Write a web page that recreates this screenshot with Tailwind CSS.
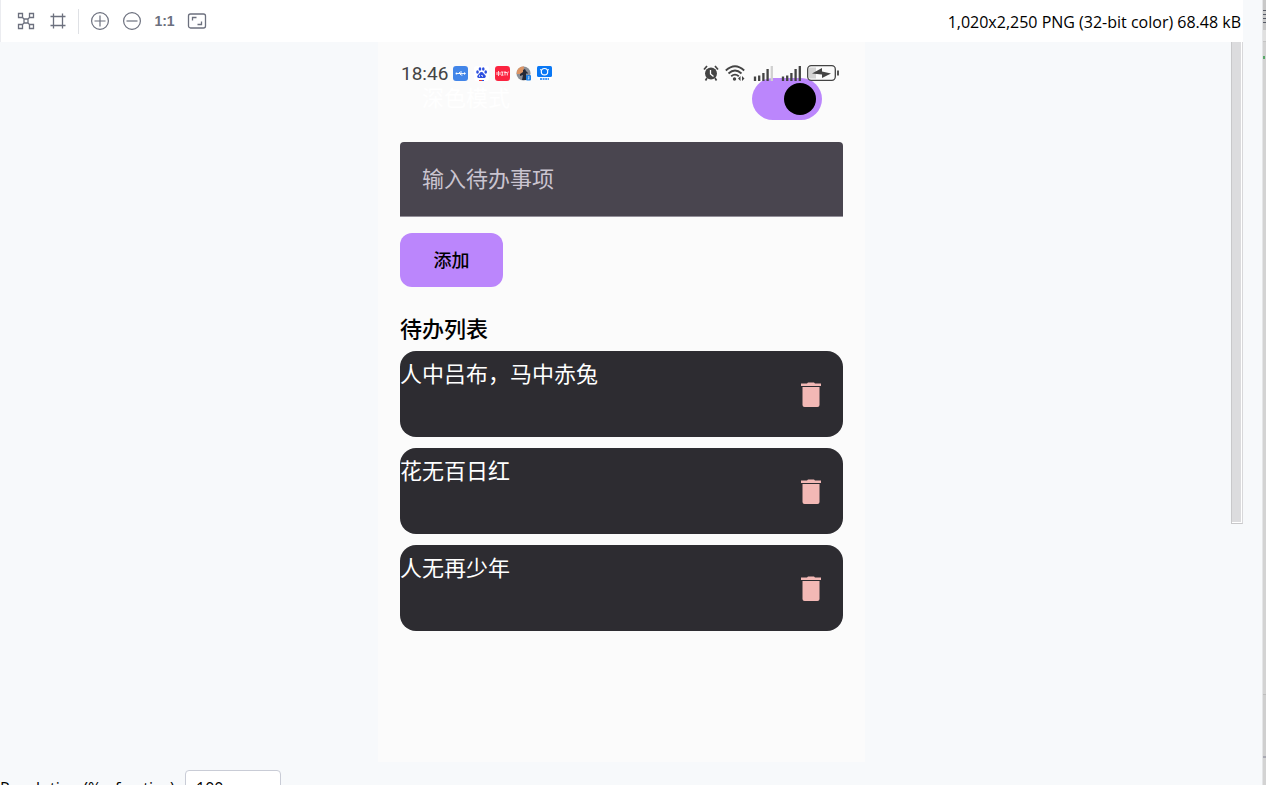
<!DOCTYPE html>
<html lang="zh" class="h-full">
<head>
    <meta charset="utf-8">
    <title>Image Viewer</title>
    <script src="https://cdn.jsdelivr.net/npm/@tailwindcss/browser@4"></script>
</head>
<body class="h-full overflow-hidden flex bg-[#f7f9fb] font-['Open_Sans','Noto_Sans_CJK_SC',sans-serif] text-black">
    <div class="flex-1 min-w-0 h-full flex flex-col">

        <!-- toolbar -->
        <header class="h-[42px] shrink-0 bg-white border-l border-[#ebecf0] flex items-center justify-between pl-[15px] pr-0.5">
            <div class="flex items-center gap-3 text-[#6c707e]">
                <button class="size-5" aria-label="Chessboard">
                    <svg viewBox="0 0 20 20" class="size-5" fill="none" stroke="currentColor">
                        <path d="M2.5 2.5h4v4h-4zM13.5 2.5h4v4h-4zM8 8h4v4h-4zM2.5 13.5h4v4h-4zM13.5 13.5h4v4h-4zM6.5 6.5L8 8M13.5 6.5L12 8M6.5 13.5L8 12M13.5 13.5L12 12" stroke-width="1.3"/>
                    </svg>
                </button>
                <button class="size-5" aria-label="Grid">
                    <svg viewBox="0 0 20 20" class="size-5" fill="none" stroke="currentColor">
                        <path d="M5.5 2.500v15M14.5 2.500v15M2.500 5.500h15M2.500 14.500h15" stroke-width="1.3"/>
                    </svg>
                </button>
                <span class="w-px h-[25px] bg-[#dfe1e5] -ml-0.5"></span>
                <button class="size-5 -ml-px" aria-label="Zoom in">
                    <svg viewBox="0 0 20 20" class="size-5" fill="none" stroke="currentColor" stroke-width="1.2">
                        <circle cx="10" cy="10" r="8.4"/><path d="M4.500 10h11M10 4.500v11"/>
                    </svg>
                </button>
                <button class="size-5" aria-label="Zoom out">
                    <svg viewBox="0 0 20 20" class="size-5" fill="none" stroke="currentColor" stroke-width="1.2">
                        <circle cx="10" cy="10" r="8.4"/><path d="M4.500 10h11"/>
                    </svg>
                </button>
                <button class="w-[21px] text-sm leading-5 font-bold text-center font-['Liberation_Sans',sans-serif]">1:1</button>
                <button class="size-5" aria-label="Fit to window">
                    <svg viewBox="0 0 20 20" class="size-5" fill="none" stroke="currentColor" stroke-width="1.3">
                        <rect x="1.5" y="3" width="17" height="14" rx="2"/><path d="M5.500 9.500v-3h4M14.500 10.500v3h-4"/>
                    </svg>
                </button>
            </div>
            <p class="pt-0.5 text-base leading-6 whitespace-nowrap">1,020x2,250 PNG (32-bit color) 68.48 kB</p>
        </header>

        <!-- canvas -->
        <main class="relative h-[720px] shrink-0 flex justify-center">
            <div class="absolute right-0 top-0 w-3 h-[482px] bg-[#dcdcde] border-l border-r border-b border-[#c8c8ca] border-r-[#d8d8da] shadow-[inset_-1px_-1px_0_#fff]"></div>

            <section class="w-[487px] bg-[#fbfbfb] px-[22px] pt-5 font-['Noto_Sans_CJK_SC',sans-serif]">
                <div class="relative z-10 h-[22px] flex items-center justify-between pl-px pr-1 text-[#444]">
                    <div class="flex items-center gap-1.5">
                        <span class="w-[46px] text-[19px] leading-[22px] pt-0.5 font-['Roboto',sans-serif]">18:46</span>
                        <svg viewBox="0 0 15 15" class="size-[15px]">
                            <rect width="15" height="15" rx="3" fill="#4285e8"/>
                            <path d="M3 7.500h9M5.500 7.500L7 6h2M6.500 7.500L8 9h1.500" fill="none" stroke="#fff" stroke-width=".9"/><circle cx="3.500" cy="7.500" r="1" fill="#fff"/><path d="M11 6l2 1.500-2 1.500z" fill="#fff"/>
                        </svg>
                        <svg viewBox="0 0 15 15" class="size-[15px]">
                            <rect width="15" height="15" rx="3" fill="#fff"/>
                            <g fill="#2d4fe0"><ellipse cx="3.5" cy="6" rx="1.3" ry="1.7"/><ellipse cx="6" cy="3" rx="1.3" ry="1.7"/><ellipse cx="9.3" cy="3" rx="1.3" ry="1.7"/><ellipse cx="11.7" cy="6" rx="1.3" ry="1.7"/><path d="M7.500 6c2 0 2 2 3.600 3 1.400 1 .6 3-1 3H5c-2 0-2.400-2-1-3 1.600-1 1.500-3 3.500-3z"/></g>
                            <path d="M5.500 9v2M7 9.500h1.500V11" fill="none" stroke="#fff" stroke-width=".7"/>
                            <path d="M5 14.500h3" stroke="#e33"/><path d="M8 14.500h2" stroke="#2d4fe0"/>
                        </svg>
                        <svg viewBox="0 0 15 15" class="size-[15px]">
                            <rect width="15" height="15" rx="3" fill="#fb2440"/>
                            <path d="M2 6v3M3.500 5v5M5 6v3M6 6h2.500M7.300 6v3M6 9.200h2.500M10 5v4.500M9.300 6.500h3v3M13.300 5.500v1" fill="none" stroke="#fff" stroke-width=".8"/>
                        </svg>
                        <svg viewBox="0 0 15 15" class="size-[15px]">
                            <circle cx="7.5" cy="7.5" r="7" fill="#8b8f96"/><path d="M1 5a7 7 0 0 1 7-4.500L7 8H.7z" fill="#dd9464"/>
                            <path d="M7 4l2-1 1 2 2 2-1 1-1-1v7H6l1-5-3 1V8l3-2z" fill="#242936"/><rect x="10" y="9" width="5" height="5.5" rx="1" fill="#1c7fe4"/><path d="M12.800 10v3h-1" fill="none" stroke="#fff" stroke-width=".7"/>
                        </svg>
                        <svg viewBox="0 0 15 15" class="size-[15px]">
                            <rect y="1" width="15" height="13" rx="2" fill="#fff"/><rect width="15" height="11" rx="1.5" fill="#0a78f5"/>
                            <circle cx="7.5" cy="5.7" r="3.2" fill="none" stroke="#fff" stroke-width="1.2"/><path d="M3 3.500l2 1M12 3.500l-2 1" stroke="#fff"/>
                            <path d="M3 13h9" stroke="#0a78f5" stroke-width="1.6" stroke-dasharray="2 .6"/>
                        </svg>
                    </div>
                    <div class="flex items-center gap-2">
                        <svg viewBox="0 0 16 16" class="size-4 -mr-0.5">
                            <circle cx="8" cy="8.5" r="6" fill="currentColor"/><path d="M1 4.500L4 1M15 4.500L12 1M4 13l-1.500 2.500M12 13l1.500 2.500" stroke="currentColor" stroke-width="1.7"/>
                            <path d="M7.500 5v4l3 2.500" fill="none" stroke="#fff" stroke-width="1.3"/>
                        </svg>
                        <svg viewBox="0 0 20 16" class="w-5 h-4" fill="none" stroke="currentColor" stroke-width="1.8">
                            <path d="M.8 5.500q9.200-8.500 18.400 0M3.500 8.500q6.500-6 13 0M6.200 11.300q3.800-3.300 7.600 0"/><circle cx="9.5" cy="14" r="1.7" fill="currentColor" stroke="none"/><path d="M13 13.500l2.500-2.500v5zM19.500 13.500L17 11v5z" fill="currentColor" stroke="none"/>
                        </svg>
                        <svg viewBox="0 0 20 16" class="w-5 h-4" fill="none" stroke="currentColor" stroke-width="2.3">
                            <path d="M2 11.500V16M6.200 10.500V16M10.400 8V16M14.600 4V16"/><path d="M18.800 1V16" stroke="#d0d0d0"/>
                        </svg>
                        <svg viewBox="0 0 20 16" class="w-5 h-4" fill="none" stroke="currentColor" stroke-width="2.3">
                            <path d="M2 11.500V16M6.200 10.500V16M10.400 8V16M14.600 4V16M18.800 1V16"/>
                        </svg>
                        <svg viewBox="0 0 32 16" class="w-8 h-4 -ml-0.5">
                            <rect x=".7" y=".7" width="27.6" height="14.6" rx="3.5" fill="#fbfbfb" stroke="currentColor" stroke-width="1.3"/>
                            <path d="M3 2.500h6v11H3a1 1 0 0 1-1-1v-9a1 1 0 0 1 1-1z" fill="#d4d4d4"/>
                            <path d="M5 8.500l10-5.500v3.500l9 2-9 4.500V9.500z" fill="currentColor"/><path d="M31 5.500v5" stroke="currentColor" stroke-width="1.8"/>
                        </svg>
                    </div>
                </div>

                <div class="h-[42px] -mt-[6px] pl-[22px] pr-[21px] flex items-center justify-between">
                    <label for="dark" class="pb-1.5 text-[22px] leading-8 text-white">深色模式</label>
                    <input id="dark" type="checkbox" role="switch" checked class="appearance-none w-[70px] h-[42px] rounded-full bg-[#bb86fc] flex items-center justify-end pr-1.5 before:content-[''] before:size-8 before:rounded-full before:bg-black">
                </div>

                <input type="text" aria-label="输入待办事项" placeholder="输入待办事项" class="block mt-[22px] w-full h-[75px] rounded-t-[4px] bg-[#49454f] border-b border-[#938f99] px-[22px] pb-1 text-[22px] text-white placeholder:text-[#cac4d0]">
                <button class="block mt-4 w-[103px] h-[54px] pb-0.5 rounded-xl bg-[#bb86fc] text-lg font-medium">添加</button>

                <h2 class="mt-[22px] mb-1.5 text-[22px] leading-9 font-medium">待办列表</h2>
                <ul class="space-y-[11px] text-white text-[22px] leading-8">
                    <li class="h-[86px] rounded-2xl bg-[#2d2c31] flex items-center justify-between pr-[22px]">
                        <span class="self-start pt-[5px]">人中吕布，马中赤兔</span>
                        <button class="pt-0.5" aria-label="删除"><svg viewBox="0 0 20 26" class="w-5 h-[26px]" fill="#f2b8b5"><path d="M0 1.500h6L7 .5h6l1 1h6v2.500H0zM1.500 5h17v18a2 2 0 0 1-2 2h-13a2 2 0 0 1-2-2z"/></svg></button>
                    </li>
                    <li class="h-[86px] rounded-2xl bg-[#2d2c31] flex items-center justify-between pr-[22px]">
                        <span class="self-start pt-[5px]">花无百日红</span>
                        <button class="pt-0.5" aria-label="删除"><svg viewBox="0 0 20 26" class="w-5 h-[26px]" fill="#f2b8b5"><path d="M0 1.500h6L7 .5h6l1 1h6v2.500H0zM1.500 5h17v18a2 2 0 0 1-2 2h-13a2 2 0 0 1-2-2z"/></svg></button>
                    </li>
                    <li class="h-[86px] rounded-2xl bg-[#2d2c31] flex items-center justify-between pr-[22px]">
                        <span class="self-start pt-[5px]">人无再少年</span>
                        <button class="pt-0.5" aria-label="删除"><svg viewBox="0 0 20 26" class="w-5 h-[26px]" fill="#f2b8b5"><path d="M0 1.500h6L7 .5h6l1 1h6v2.500H0zM1.500 5h17v18a2 2 0 0 1-2 2h-13a2 2 0 0 1-2-2z"/></svg></button>
                    </li>
                </ul>
            </section>
        </main>

        <!-- export options -->
        <footer class="shrink-0 mt-2 flex items-center text-base">
            <label for="resolution" class="w-[185px] whitespace-nowrap">Resolution (% of native):</label>
            <input id="resolution" type="text" value="100" class="w-24 h-9 rounded-[4px] border border-[#c9ccd6] bg-white px-2.5">
        </footer>
    </div>

    <!-- edge of the neighbouring editor -->
    <aside class="ml-[19px] w-1 shrink-0 h-full flex flex-col bg-[#d3d3d3] border-l border-[#e4e5e7]">
        <div class="h-[30px] pt-2.5 bg-[#c8c8c8] flex flex-col gap-[3px]">
            <span class="h-px bg-[#555a66]"></span>
            <span class="h-px bg-[#555a66]"></span>
            <span class="h-px bg-[#555a66]"></span>
            <span class="h-px bg-[#555a66]"></span>
        </div>
        <div class="h-3 bg-[#e0e0e0] border-b border-[#c4c4c4]"></div>
        <div class="mt-3.5 w-0.5 h-[3px] bg-[#59a869]"></div>
        <div class="mt-auto h-16 bg-[#cfcfcf] border-t border-b-2 border-t-[#bdbdbd] border-b-[#a9a9b3]"></div>
        <div class="h-[27px]"></div>
    </aside>
</body>
</html>
